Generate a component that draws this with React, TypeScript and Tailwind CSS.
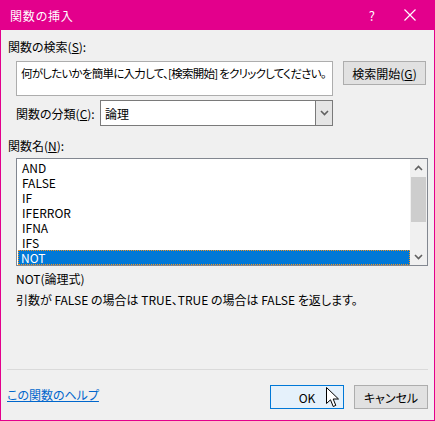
import React from 'react'

const items = ['AND', 'FALSE', 'IF', 'IFERROR', 'IFNA', 'IFS', 'NOT']

function Arrow({ up }: { up?: boolean }) {
  return (
    <svg width="9" height="6" viewBox="0 0 9 6" className={up ? 'rotate-180' : ''}>
      <path d="M1 1 L4.5 4.5 L8 1" fill="none" stroke="#606060" strokeWidth="1.6" />
    </svg>
  )
}

export default function App() {
  return (
    <div className="w-[435px] h-[421px] bg-[#e3008c] px-px pb-px flex flex-col font-['Noto_Sans_CJK_JP',sans-serif] [font-feature-settings:'palt'] text-[12px] leading-[15px] text-black">
      {/* title bar */}
      <div className="h-[30px] flex items-center text-white">
        <span className="ml-[9px] text-[12px] tracking-[0.8px]">関数の挿入</span>
        <span className="ml-auto mr-[29px] text-[13px]">?</span>
        <svg width="12" height="12" viewBox="0 0 12 12" className="mr-[18px]">
          <path d="M0.5 0.5 L11.5 11.5 M11.5 0.5 L0.5 11.5" stroke="white" strokeWidth="1.2" />
        </svg>
      </div>

      <div className="flex-1 bg-[#f0f0f0] relative flex flex-col pl-[6px] pr-[5px]">
        <div className="mt-[9px] ml-px">
          関数の検索(<span className="underline">S</span>):
        </div>

        <div className="mt-[7px] ml-[9px] flex items-start gap-[10px]">
          <div className="w-[317px] h-[35px] bg-white border border-[#adadad] px-[4px] pt-[4px] whitespace-nowrap overflow-hidden text-[11.5px] tracking-[-0.75px]">
            何がしたいかを簡単に入力して、[検索開始] をクリックしてください。
          </div>
          <div className="w-[83px] h-[24px] bg-[#e1e1e1] border border-[#adadad] flex items-center justify-center">
            検索開始(<span className="underline">G</span>)
          </div>
        </div>

        <div className="mt-[4px] ml-[9px] flex items-center">
          <span className="w-[84px]">関数の分類(<span className="underline">C</span>):</span>
          <div className="w-[233px] h-[26px] bg-white border border-[#7a7a7a] flex items-center">
            <span className="pl-[4px] flex-1">論理</span>
            <div className="w-[17px] h-full bg-[#e5e5e5] border-l border-[#7a7a7a] flex items-center justify-center">
              <Arrow />
            </div>
          </div>
        </div>

        <div className="mt-[12px] ml-px">
          関数名(<span className="underline">N</span>):
        </div>

        <div className="mt-[5px] ml-[9px] w-[412px] h-[108px] bg-white border border-[#828790] flex">
          <div className="flex-1 pt-px pl-px flex flex-col">
            {items.map(it => (
              <div
                key={it}
                className={
                  it === 'NOT'
                    ? 'h-[15px] leading-[15px] overflow-hidden bg-[#0078d7] text-white pl-[3px] outline outline-1 outline-dotted outline-[#f7941d] -outline-offset-1'
                    : 'h-[15px] leading-[15px] overflow-hidden pl-[4px]'
                }
              >
                {it}
              </div>
            ))}
          </div>
          <div className="w-[17px] bg-[#f0f0f0] flex flex-col items-center">
            <div className="h-[18px] flex items-center justify-center">
              <Arrow up />
            </div>
            <div className="w-[15px] h-[45px] bg-[#cdcdcd]" />
            <div className="mt-auto h-[17px] flex items-center justify-center">
              <Arrow />
            </div>
          </div>
        </div>

        <div className="mt-[5px] ml-[9px]">NOT(論理式)</div>
        <div className="mt-[6px] ml-[9px]">引数が FALSE の場合は TRUE、TRUE の場合は FALSE を返します。</div>

        <div className="mt-[62px] ml-0 w-[421px] h-px bg-[#dadada]" />

        <div className="mt-[15px] flex items-center">
          <span className="text-[#0066cc] underline mt-[-6px]">この関数のヘルプ</span>
          <div className="ml-auto w-[74px] h-[24px] bg-[#e5f1fb] border border-[#0078d7] flex items-center justify-center">
            OK
          </div>
          <div className="ml-[10px] mr-[1px] w-[74px] h-[24px] bg-[#e1e1e1] border border-[#adadad] flex items-center justify-center">
            キャンセル
          </div>
        </div>

        <svg
          width="14"
          height="21"
          viewBox="0 0 14 21"
          className="absolute left-[325px] top-[357px]"
        >
          <path
            d="M0.5 0.5 L0.5 16.5 L4.5 12.8 L7.2 19.5 L9.8 18.4 L7.2 12 L12.5 12 Z"
            fill="white"
            stroke="black"
            strokeWidth="1"
          />
        </svg>
      </div>
    </div>
  )
}
